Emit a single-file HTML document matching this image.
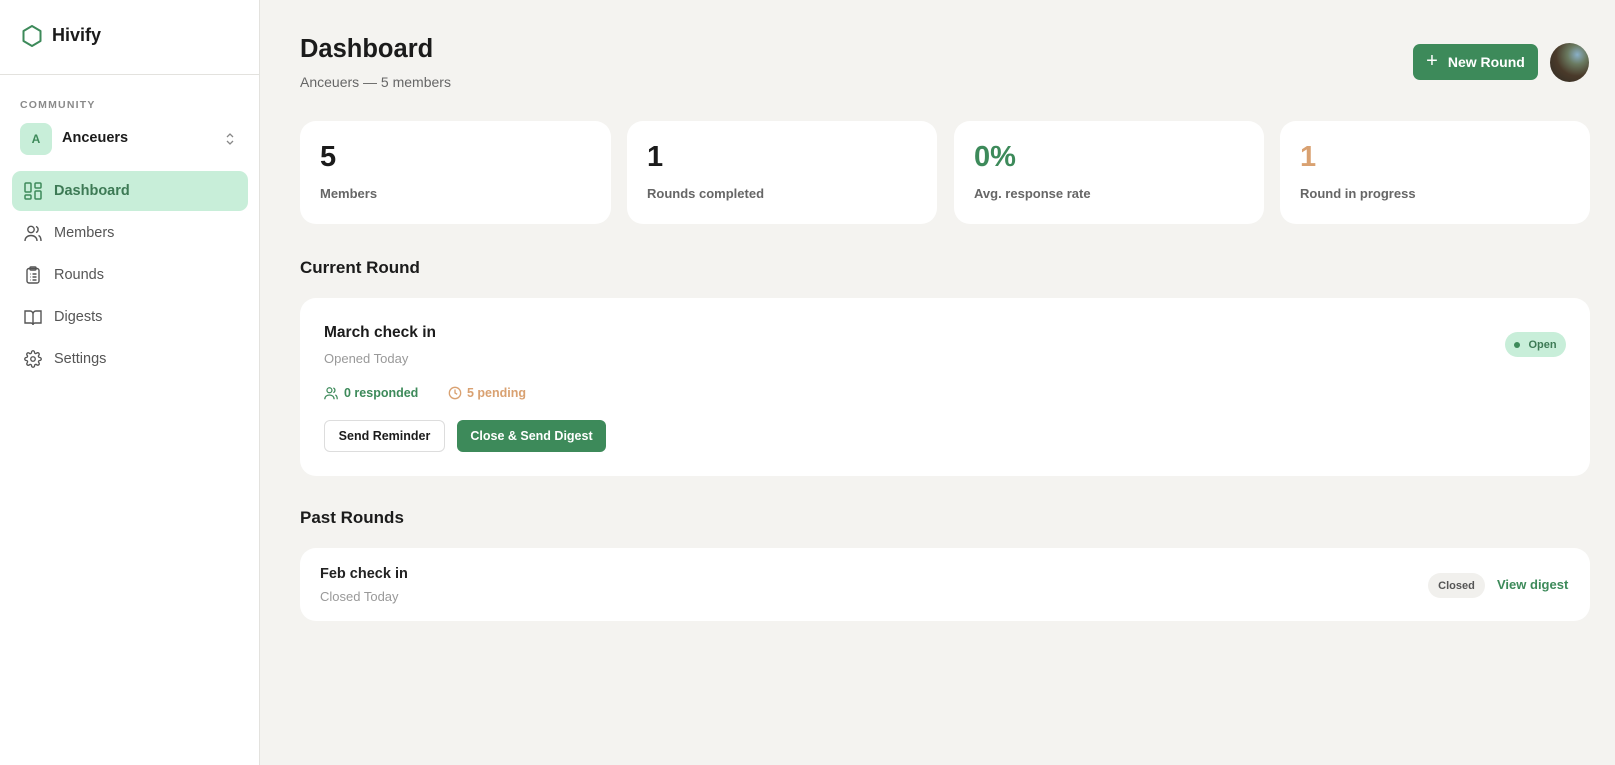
<!DOCTYPE html>
<html><head><meta charset="utf-8"><style>
*{box-sizing:border-box;margin:0;padding:0}
body{width:1615px;height:765px;background:#f4f3f0;font-family:"Liberation Sans",sans-serif;color:#1b1b1b;position:relative;overflow:hidden}
.side{position:absolute;left:0;top:0;width:260px;height:765px;background:#fff;border-right:1px solid #e3e2de}
.abs{position:absolute}
.nav{position:absolute;left:12px;width:236px;height:40px;border-radius:9px;display:flex;align-items:center;padding-left:12px;font-size:14.5px;color:#555}
.nav svg{margin-right:12px}
.card{position:absolute;background:#fff;border-radius:16px}
.stat .n{position:absolute;left:20px;top:20px;font-size:29px;font-weight:bold}
.stat .l{position:absolute;left:20px;top:65px;font-size:13px;color:#666;font-weight:bold}
.pill{position:absolute;display:flex;align-items:center;justify-content:center;border-radius:13px;font-size:11px;font-weight:bold}
</style></head><body>
<div class="side">
 <svg class="abs" style="left:21px;top:24px" width="22" height="24" viewBox="0 0 22 24"><path d="M11 2 L19.5 7 V17 L11 22 L2.5 17 V7 Z" fill="none" stroke="#3d8a5a" stroke-width="2" stroke-linejoin="round"/></svg>
 <div class="abs" style="left:52px;top:25px;font-size:18px;font-weight:bold">Hivify</div>
 <div class="abs" style="left:0;top:74px;width:259px;border-top:1px solid #e3e2de"></div>
 <div class="abs" style="left:20px;top:99px;font-size:10.5px;letter-spacing:1.2px;color:#8a8a8a;font-weight:bold">COMMUNITY</div>
 <div class="abs" style="left:20px;top:123px;width:32px;height:32px;border-radius:8px;background:#c8eed9;color:#3d8a5a;font-size:12px;font-weight:bold;text-align:center;line-height:32px">A</div>
 <div class="abs" style="left:62px;top:130px;font-size:14.5px;font-weight:bold">Anceuers</div>
 <svg class="abs" style="left:225px;top:131px" width="10" height="16" viewBox="0 0 10 16"><path d="M2 6 L5 3 L8 6 M2 10 L5 13 L8 10" fill="none" stroke="#888" stroke-width="1.3"/></svg>
 <div class="nav" style="top:171px;background:#c8eed9;color:#3d7a55;font-weight:bold"><svg width="18" height="18" viewBox="0 0 18 18" fill="none" stroke="#3d8a5a" stroke-width="1.5"><rect x="1" y="1" width="6" height="9" rx="1"/><rect x="11" y="1" width="6" height="5" rx="1"/><rect x="11" y="9" width="6" height="8" rx="1"/><rect x="1" y="13" width="6" height="4" rx="1"/></svg>Dashboard</div>
 <div class="nav" style="top:213px"><svg width="18" height="18" viewBox="0 0 18 18" fill="none" stroke="#555" stroke-width="1.4"><circle cx="7" cy="5.5" r="3.2"/><path d="M1 17c0-3.5 2.7-5.5 6-5.5s6 2 6 5.5M12 2.5a3.2 3.2 0 0 1 0 6M14.5 11.5c1.6.6 2.5 2.5 2.5 5.5"/></svg>Members</div>
 <div class="nav" style="top:255px"><svg width="18" height="18" viewBox="0 0 18 18" fill="none" stroke="#555" stroke-width="1.4"><rect x="3" y="2.5" width="12" height="14.5" rx="2"/><rect x="6" y="1" width="6" height="3" rx="1"/><path d="M6 8h.5M6 11h.5M6 14h.5M8.5 8h4M8.5 11h4M8.5 14h4"/></svg>Rounds</div>
 <div class="nav" style="top:297px"><svg width="18" height="18" viewBox="0 0 18 18" fill="none" stroke="#555" stroke-width="1.4"><path d="M1 3h5a3 3 0 0 1 3 3v11a2 2 0 0 0-2-2H1zM17 3h-5a3 3 0 0 0-3 3v11a2 2 0 0 1 2-2h6z"/></svg>Digests</div>
 <div class="nav" style="top:339px"><svg width="18" height="18" viewBox="0 0 24 24" fill="none" stroke="#555" stroke-width="1.8"><circle cx="12" cy="12" r="3"/><path d="M19.4 15a1.65 1.65 0 0 0 .33 1.820l.06.06a2 2 0 1 1-2.83 2.83l-.06-.06a1.65 1.65 0 0 0-1.82-.33 1.65 1.65 0 0 0-1 1.51V21a2 2 0 1 1-4 0v-.09A1.65 1.65 0 0 0 9 19.4a1.65 1.65 0 0 0-1.82.33l-.06.06a2 2 0 1 1-2.830-2.830l.06-.06A1.65 1.65 0 0 0 4.68 15a1.65 1.65 0 0 0-1.51-1H3a2 2 0 1 1 0-4h.09A1.65 1.65 0 0 0 4.6 9a1.65 1.65 0 0 0-.33-1.82l-.06-.06a2 2 0 1 1 2.83-2.83l.06.06A1.65 1.65 0 0 0 9 4.68 1.65 1.65 0 0 0 10 3.17V3a2 2 0 1 1 4 0v.09a1.65 1.65 0 0 0 1 1.51 1.65 1.65 0 0 0 1.82-.33l.06-.06a2 2 0 1 1 2.83 2.83l-.06.06A1.65 1.65 0 0 0 19.4 9a1.65 1.65 0 0 0 1.51 1H21a2 2 0 1 1 0 4h-.09a1.65 1.65 0 0 0-1.51 1z"/></svg>Settings</div>
</div>

<div class="abs" style="left:300px;top:35px;font-size:25.5px;font-weight:bold">Dashboard</div>
<div class="abs" style="left:300px;top:74px;font-size:14px;color:#666">Anceuers — 5 members</div>
<div class="abs" style="left:1413px;top:44px;width:125px;height:36px;border-radius:7px;background:#3d8a5a;color:#fff;font-size:14px;font-weight:bold;display:flex;align-items:center;justify-content:center"><span style="font-size:20px;font-weight:normal;margin-right:10px;margin-top:-2px">+</span>New Round</div>
<div class="abs" style="left:1550px;top:43px;width:39px;height:39px;border-radius:50%;background:radial-gradient(circle at 70% 30%,#8ab0c8 0,#6a7a60 25%,#4a3a2a 55%,#2c2a22 100%)"></div>

<div class="card stat" style="left:300px;top:121px;width:311px;height:103px"><div class="n">5</div><div class="l">Members</div></div>
<div class="card stat" style="left:627px;top:121px;width:310px;height:103px"><div class="n">1</div><div class="l">Rounds completed</div></div>
<div class="card stat" style="left:954px;top:121px;width:310px;height:103px"><div class="n" style="color:#3d8a5a">0%</div><div class="l">Avg. response rate</div></div>
<div class="card stat" style="left:1280px;top:121px;width:310px;height:103px"><div class="n" style="color:#d9a171">1</div><div class="l">Round in progress</div></div>

<div class="abs" style="left:300px;top:258px;font-size:17px;font-weight:bold">Current Round</div>
<div class="card" style="left:300px;top:298px;width:1290px;height:178px">
 <div class="abs" style="left:24px;top:26px;font-size:15.5px;font-weight:bold">March check in</div>
 <div class="abs" style="left:24px;top:53px;font-size:13px;color:#999">Opened Today</div>
 <svg class="abs" style="left:24px;top:88px" width="14" height="14" viewBox="0 0 18 18" fill="none" stroke="#3d8a5a" stroke-width="1.6"><circle cx="7" cy="5.5" r="3.2"/><path d="M1 17c0-3.5 2.7-5.5 6-5.5s6 2 6 5.5M12 2.5a3.2 3.2 0 0 1 0 6M14.5 11.5c1.6.6 2.5 2.5 2.5 5.5"/></svg>
 <div class="abs" style="left:44px;top:88px;font-size:12.5px;color:#3d8a5a;font-weight:bold">0 responded</div>
 <svg class="abs" style="left:148px;top:88px" width="14" height="14" viewBox="0 0 16 16" fill="none" stroke="#d9a171" stroke-width="1.5"><circle cx="8" cy="8" r="6.5"/><path d="M8 4v4l2.5 1.5"/></svg>
 <div class="abs" style="left:167px;top:88px;font-size:12.5px;color:#d9a171;font-weight:bold">5 pending</div>
 <div class="abs" style="left:24px;top:122px;width:121px;height:32px;border:1px solid #ddd;border-radius:6px;font-size:12.5px;font-weight:bold;text-align:center;line-height:30px">Send Reminder</div>
 <div class="abs" style="left:157px;top:122px;width:149px;height:32px;background:#3d8a5a;color:#fff;border-radius:6px;font-size:12.5px;font-weight:bold;text-align:center;line-height:32px">Close &amp; Send Digest</div>
 <div class="pill" style="left:1205px;top:34px;width:61px;height:25px;background:#c8eed9;color:#3d7a55"><span style="width:6px;height:6px;border-radius:50%;background:#3d8a5a;margin-right:8px"></span>Open</div>
</div>

<div class="abs" style="left:300px;top:508px;font-size:17px;font-weight:bold">Past Rounds</div>
<div class="card" style="left:300px;top:548px;width:1290px;height:73px">
 <div class="abs" style="left:20px;top:18px;font-size:14.5px;font-weight:bold;color:#222">Feb check in</div>
 <div class="abs" style="left:20px;top:41px;font-size:13px;color:#999">Closed Today</div>
 <div class="pill" style="left:1128px;top:25px;width:57px;height:25px;background:#f1f0ed;color:#555">Closed</div>
 <div class="abs" style="left:1197px;top:29px;font-size:13px;color:#3d8a5a;font-weight:bold">View digest</div>
</div>
</body></html>
